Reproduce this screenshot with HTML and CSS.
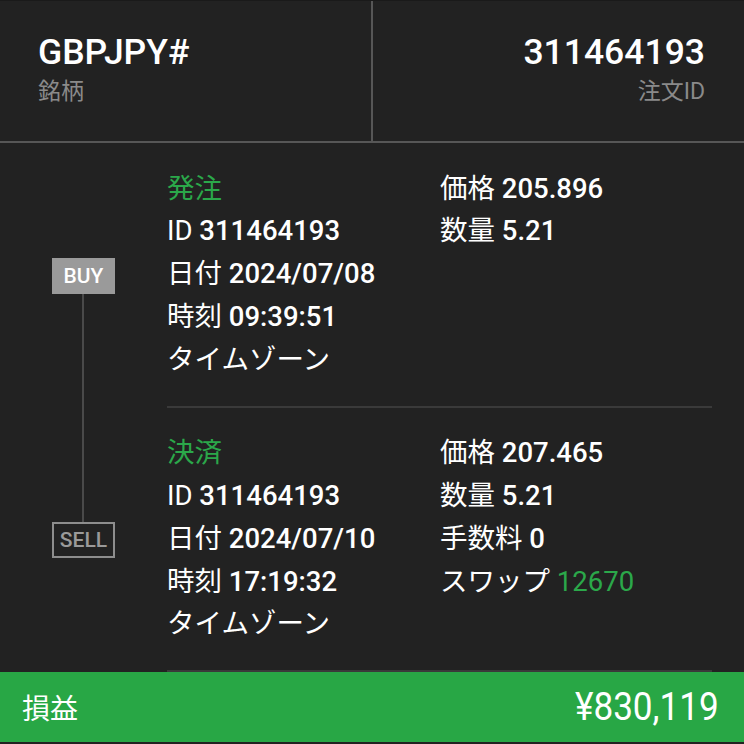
FILE: index.html
```html
<!DOCTYPE html>
<html lang="ja">
<head>
<meta charset="utf-8">
<title>GBPJPY# 注文</title>
<link rel="stylesheet" href="styles.css">
</head>
<body>
<div class="screen">
  <header class="head">
    <div class="cell">
      <div class="big">GBPJPY#</div>
      <div class="label">銘柄</div>
    </div>
    <div class="cell right">
      <div class="big">311464193</div>
      <div class="label">注文ID</div>
    </div>
  </header>

  <main class="trades">
    <section class="trade buy">
      <div class="rail"><span class="badge">BUY</span></div>
      <div class="info">
        <div class="col">
          <div class="row green">発注</div>
          <div class="row">ID <b>311464193</b></div>
          <div class="row">日付 <b>2024/07/08</b></div>
          <div class="row">時刻 <b>09:39:51</b></div>
          <div class="row">タイムゾーン</div>
        </div>
        <div class="col">
          <div class="row">価格 <b>205.896</b></div>
          <div class="row">数量 <b>5.21</b></div>
        </div>
      </div>
    </section>

    <section class="trade sell">
      <div class="rail"><span class="badge">SELL</span></div>
      <div class="info">
        <div class="col">
          <div class="row green">決済</div>
          <div class="row">ID <b>311464193</b></div>
          <div class="row">日付 <b>2024/07/10</b></div>
          <div class="row">時刻 <b>17:19:32</b></div>
          <div class="row">タイムゾーン</div>
        </div>
        <div class="col">
          <div class="row">価格 <b>207.465</b></div>
          <div class="row">数量 <b>5.21</b></div>
          <div class="row">手数料 <b>0</b></div>
          <div class="row">スワップ <span class="green">12670</span></div>
        </div>
      </div>
    </section>
  </main>

  <footer class="pl">
    <span class="pl-label">損益</span>
    <span class="pl-amount">¥830,119</span>
  </footer>
</div>
</body>
</html>
```

FILE: styles.css
```css
html, body {
  margin: 0;
  padding: 0;
  background: #222222;
}

.screen {
  width: 744px;
  height: 744px;
  background: #222222;
  color: #ffffff;
  font-family: Roboto, "Noto Sans CJK JP", sans-serif;
  display: flex;
  flex-direction: column;
  overflow: hidden;
}

/* header */
.head {
  display: flex;
  height: 140px;
  border-top: 1px solid #1a1a1a;
  border-bottom: 2px solid #575757;
  box-sizing: content-box;
}

.cell {
  width: 371px;
  padding: 31px 0 0 38px;
  box-sizing: border-box;
}

.cell.right {
  flex: 1;
  width: auto;
  border-left: 2px solid #575757;
  padding: 31px 39px 0 0;
  text-align: right;
}

.big {
  font-size: 35.5px;
  font-weight: 500;
  line-height: 40px;
}

.label {
  font-size: 23px;
  line-height: 30px;
  color: #8a8a8a;
  margin-top: 5px;
}

/* trades */
.trades {
  flex: 1;
  display: flex;
  flex-direction: column;
}

.trade {
  display: flex;
}

.rail {
  width: 167px;
  flex: none;
  position: relative;
  display: flex;
  align-items: center;
  justify-content: center;
}

.rail::before {
  content: "";
  position: absolute;
  left: 82px;
  width: 2px;
  background: #4a4a4a;
}

.buy .rail::before {
  top: 50%;
  bottom: 0;
}

.sell .rail::before {
  top: 0;
  bottom: 50%;
}

.badge {
  position: relative;
  z-index: 1;
  width: 63px;
  height: 36px;
  box-sizing: border-box;
  display: flex;
  align-items: center;
  justify-content: center;
  font-size: 21px;
  font-weight: 500;
}

.buy .badge {
  background: #9a9a9a;
  color: #ffffff;
}

.sell .badge {
  background: #222222;
  border: 2px solid #8d8d8d;
  color: #9a9a9a;
}

.info {
  flex: 1;
  margin-right: 32px;
  display: grid;
  grid-template-columns: 273px 1fr;
  padding: 25px 0 25px;
  border-bottom: 2px solid #3a3a3a;
}

.sell .info {
  padding: 24px 0 24px;
}

.row {
  height: 42.75px;
  line-height: 42.75px;
  font-size: 27.5px;
  white-space: nowrap;
}

.row b {
  font-weight: 500;
}

.green {
  color: #2ba84a;
}

/* profit / loss bar */
.pl {
  height: 70px;
  margin-bottom: 2px;
  background: #28a745;
  display: flex;
  align-items: center;
  justify-content: space-between;
  padding: 0 25px 0 22px;
}

.pl-label {
  font-size: 28px;
}

.pl-amount {
  display: inline-block;
  font-size: 39px;
  transform: scaleX(0.9);
  transform-origin: right center;
}
```
